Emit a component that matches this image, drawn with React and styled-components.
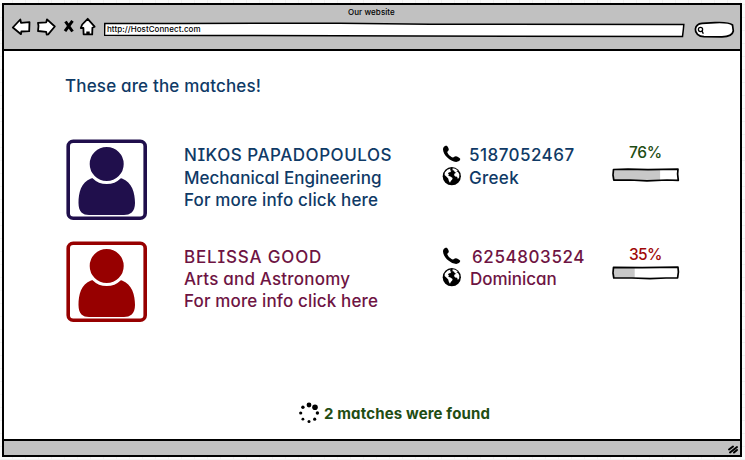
import React from 'react';
import styled, { createGlobalStyle } from 'styled-components';

const Global = createGlobalStyle`
  * { box-sizing: border-box; }
  body { margin: 0; background: #fafafa; }
`;

const Page = styled.div`
  width: 745px;
  height: 460px;
  padding: 3px 3px 3px 2px;
  background:
    linear-gradient(90deg, #f1f1f1 1px, transparent 1px) 12px 0 / 13px 13px,
    linear-gradient(#f1f1f1 1px, transparent 1px) 0 4px / 13px 13px,
    #fafafa;
  font-family: Inter, "Liberation Sans", sans-serif;
  font-feature-settings: "cv11", "cv08";
  overflow: hidden;
`;

const Browser = styled.div`
  display: flex;
  flex-direction: column;
  width: 740px;
  height: 454px;
  background: #fff;
  border: 2px solid #000;
`;

const Chrome = styled.header`
  height: 46px;
  flex: none;
  background: #c1c1c1;
  border-bottom: 2px solid #000;
`;

const Title = styled.div`
  height: 12px;
  padding-left: 344px;
  font-size: 8px;
  font-weight: 500;
  line-height: 14px;
  letter-spacing: 0.08px;
  color: #000;
`;

const Toolbar = styled.div`
  display: flex;
  height: 32px;
`;

const NavIcons = styled.svg`
  width: 100px;
  height: 32px;
  flex: none;
`;

const Address = styled.div`
  display: grid;
  width: 583px;
  height: 32px;
  & > * { grid-area: 1 / 1; }
`;

const Url = styled.span`
  z-index: 1;
  padding: 6px 0 0 3px;
  font-size: 8px;
  font-weight: 500;
  line-height: 13px;
  letter-spacing: 0.05px;
  color: #000;
`;

const Search = styled.svg`
  width: 50px;
  height: 32px;
`;

const Content = styled.main`
  flex: 1;
  display: flex;
  flex-direction: column;
  padding-left: 62px;
`;

const Heading = styled.h1`
  margin: 24px 0 0 -1px;
  height: 64px;
  font-size: 17px;
  line-height: 22px;
  font-weight: 500;
  letter-spacing: 0.17px;
  color: #0f3a66;
`;

const Match = styled.article`
  display: grid;
  grid-template-columns: 118px 258px 170px 67px;
  height: 102px;
  color: ${(p) => p.$color};
`;

const Avatar = styled.svg`
  width: 81px;
  height: 81px;
`;

const Lines = styled.div`
  padding-top: 4.5px;
`;

const Line = styled.div`
  display: flex;
  height: ${(p) => p.$height}px;
  font-size: 17px;
  line-height: 22px;
  font-weight: 500;
  letter-spacing: ${(p) => p.$spacing}px;
  white-space: pre;
`;

const LineIcon = styled.svg`
  width: 20px;
  height: 20px;
  margin: 0 ${(p) => p.$gap}px 0 0;
  color: #000;
  flex: none;
`;

const Score = styled.div`
  padding-top: 5px;
`;

const Percent = styled.div`
  height: ${(p) => p.$height}px;
  padding: ${(p) => p.$drop}px 0 0 17px;
  font-size: 15.5px;
  line-height: 18px;
  font-weight: 500;
  letter-spacing: ${(p) => p.$spacing}px;
  color: ${(p) => p.$color};
`;

const Meter = styled.svg`
  display: block;
  width: 68px;
  height: 14px;
`;

const Status = styled.div`
  display: flex;
  align-items: center;
  gap: 4px;
  height: 22px;
  margin: 59px 0 0 233px;
  font-size: 15px;
  font-weight: 650;
  letter-spacing: 0.14px;
  color: #1f4d14;
`;

const Spinner = styled.svg`
  width: 21px;
  height: 22px;
`;

const Footer = styled.footer`
  display: flex;
  justify-content: flex-end;
  height: 16px;
  flex: none;
  background: #c1c1c1;
  border-top: 2px solid #000;
`;

const Grip = styled.svg`
  width: 15px;
  height: 14px;
`;

const Person = ({ color }) => (
  <Avatar viewBox="0 0 81 81">
    <rect x="2.2" y="2.2" width="77" height="77" rx="5" fill="#fff" stroke={color} strokeWidth="3.6" />
    <path
      d="M25 39.5C15 43 12.5 54 12.5 64C12.5 73 17 76 23 76H58C64 76 69 73 69 64C69 54 66 43 56 39.5C52 37 30 37 25 39.5Z"
      fill={color}
    />
    <circle cx="40.7" cy="25" r="18.5" fill={color} stroke="#fff" strokeWidth="3" />
  </Avatar>
);

const Phone = ({ gap }) => (
  <LineIcon $gap={gap} viewBox="0 0 20 20">
    <path
      fill="currentColor"
      d="M1.6 3.2C2.6 1.9 3.8 1.4 4.8 1.8C5.8 2.5 6.7 4.2 6.8 5.7C6.7 6.9 5.2 7.2 5.3 8.3C5.9 10.3 8.7 13 10.9 13.5C12.1 13.5 12.5 12.3 13.7 12.3C15.4 12.5 17.6 13.7 18.2 14.8C18.5 16.4 16.3 17.9 14.2 17.9C8 17.5 1.2 11 1 5.6C1 4.5 1.2 3.8 1.6 3.2Z"
    />
  </LineIcon>
);

const Globe = ({ gap }) => (
  <LineIcon $gap={gap} viewBox="0 0 20 20">
    <circle cx="9.8" cy="9.2" r="9.1" fill="currentColor" />
    <path
      fill="#fff"
      d="M2.8 5.6L5.4 2.7L8.6 1.4L8 3.2L9.4 3.8L8.2 5.3L6.9 5.2L5.9 6.9L7.2 7.6L6.2 8.8L8.4 9.5L10.6 10.9L10.2 12.6L8.8 13.9L8 15.8L6.9 13.9L6.2 11.4L4.3 9.5L2.6 7.9ZM10.6 1.3L13.2 1.8L15.8 3.6L14.4 4.3L16 5L17.3 7.2L17.2 10.3L15.9 12.1L15.1 9.8L13.2 9.5L12 8L12.8 6.2L14.4 5.9L12.7 5L12 3.6L10.6 3.2Z"
    />
  </LineIcon>
);

const ProgressBar = ({ value, outline }) => (
  <Meter viewBox="0 0 68 14">
    <path d="M2 1.5H66V12H2Z" fill="#fff" />
    <path d={`M2 1.5H${1 + value * 0.62}V12H2Z`} fill="#c8c8c8" />
    <path d={outline} fill="none" stroke="#000" strokeWidth="1.7" strokeLinejoin="round" />
  </Meter>
);

const matches = [
  {
    color: '#0f3a66', avatar: '#200f4c', heights: [23, 22, 22],
    lines: [['NIKOS PAPADOPOULOS', 0.53], ['Mechanical Engineering', 0.02], ['For more info click here', 0.13]],
    phone: ['5187052467', 0.46, 7], language: ['Greek', 0.3, 7], phoneHeight: 23,
    value: 76, percentColor: '#1f4d14', percentSpacing: -0.3, percentHeight: 24, percentDrop: 0,
    outline: 'M1.5 1.5L16 1.2L36 1.6L66 1.2L65.6 6L66.3 12.3L55 12L35 12.8L18 12L1.8 12.2L1 7Z',
  },
  {
    color: '#6e1443', avatar: '#970000', heights: [22, 22, 22],
    lines: [['BELISSA GOOD', 0.82], ['Arts and Astronomy', 0.2], ['For more info click here', 0.13]],
    phone: ['6254803524', 0.6, 10], language: ['Dominican', -0.02, 8], phoneHeight: 22,
    value: 35, percentColor: '#a00808', percentSpacing: -0.6, percentHeight: 20, percentDrop: 0,
    outline: 'M1.5 1.3L30 1.6L66 1.2L66.4 6L65.6 11.8L54 12L38 12.7L20 12L1.8 12L1 7Z',
  },
];

const MatchRow = ({ m }) => (
  <Match $color={m.color}>
    <Person color={m.avatar} />
    <Lines>
      {m.lines.map(([text, spacing], i) => (
        <Line key={text} $height={m.heights[i]} $spacing={spacing}>{text}</Line>
      ))}
    </Lines>
    <Lines>
      <Line $height={m.phoneHeight} $spacing={m.phone[1]}><Phone gap={m.phone[2]} />{m.phone[0]}</Line>
      <Line $height={22} $spacing={m.language[1]}><Globe gap={m.language[2]} />{m.language[0]}</Line>
    </Lines>
    <Score>
      <Percent
        $color={m.percentColor}
        $spacing={m.percentSpacing}
        $height={m.percentHeight}
        $drop={m.percentDrop}
      >
        {m.value}%
      </Percent>
      <ProgressBar value={m.value} outline={m.outline} />
    </Score>
  </Match>
);

const dots = [
  [10, 3, 2.4], [16, 5.2, 2.8], [18.4, 11, 1.7], [15.7, 17.2, 1.6],
  [10, 19.6, 1.5], [3.9, 17.2, 1.4], [1.7, 11, 1.6], [3.9, 5.2, 1.7],
];

export default function App() {
  return (
    <Page>
      <Global />
      <Browser>
        <Chrome>
          <Title>Our website</Title>
          <Toolbar>
            <NavIcons viewBox="4 17 100 32" fill="#fff" stroke="#000" strokeWidth="1.8" strokeLinejoin="round">
              <path d="M12.8 27.5L20.3 19.5L21 22.8L29.5 22.2L29.2 31.2L21.3 31.5L21 34.2Z" />
              <path d="M38 22.8L46.2 22.4L47 19.3L54.8 26.5L48.2 34.4L46.7 34.6L46.2 31.8L38 31L38.5 26Z" />
              <path d="M65.5 21.5L72.5 31.5M72.5 20.8L65 31.2" strokeWidth="3" />
              <path d="M87.7 18.8L94.6 26.7L92.4 27.8L92.2 34.4L83.6 34.3L83.4 28L80.8 28L82.2 24.5Z" />
              <path d="M86.3 31.5H89.7V34.5H86.3Z" fill="#000" stroke="none" />
            </NavIcons>
            <Address>
              <svg width="583" height="32" viewBox="104 17 583 32">
                <path
                  d="M104.8 23.6L180 23.4L340 23.2L430 24.2L683.8 24.5L683.4 29L682.5 36.6L420 35.9L210 35.5L104.5 35.2Z"
                  fill="#fff" stroke="#000" strokeWidth="1.5"
                />
              </svg>
              <Url>http://HostConnect.com</Url>
            </Address>
            <Search viewBox="687 17 50 32" fill="#fff" stroke="#000" strokeWidth="1.7">
              <path d="M702 23.3L715 22.6C723 22.2 730 23 732.5 25L733.3 31C732.5 35.5 728 36.6 722 36.8L704 36.7C698.5 36.5 695 33 695.4 29C695.8 26 698.5 23.6 702 23.3Z" />
              <circle cx="700.5" cy="29.5" r="2.1" strokeWidth="1.3" />
              <path d="M702 31L703.3 33.8" strokeWidth="1.4" />
            </Search>
          </Toolbar>
        </Chrome>
        <Content>
          <Heading>These are the matches!</Heading>
          {matches.map((m) => <MatchRow key={m.avatar} m={m} />)}
          <Status>
            <Spinner viewBox="0 0 21 22">
              {dots.map(([x, y, r]) => <circle key={`${x}-${y}`} cx={x} cy={y} r={r} />)}
            </Spinner>
            2 matches were found
          </Status>
        </Content>
        <Footer>
          <Grip viewBox="0 0 15 14" stroke="#000" strokeWidth="2" strokeLinecap="round">
            <path d="M4 8.5L8 5.5M5 11.5L12 6M9 11.5L12 9" />
          </Grip>
        </Footer>
      </Browser>
    </Page>
  );
}
